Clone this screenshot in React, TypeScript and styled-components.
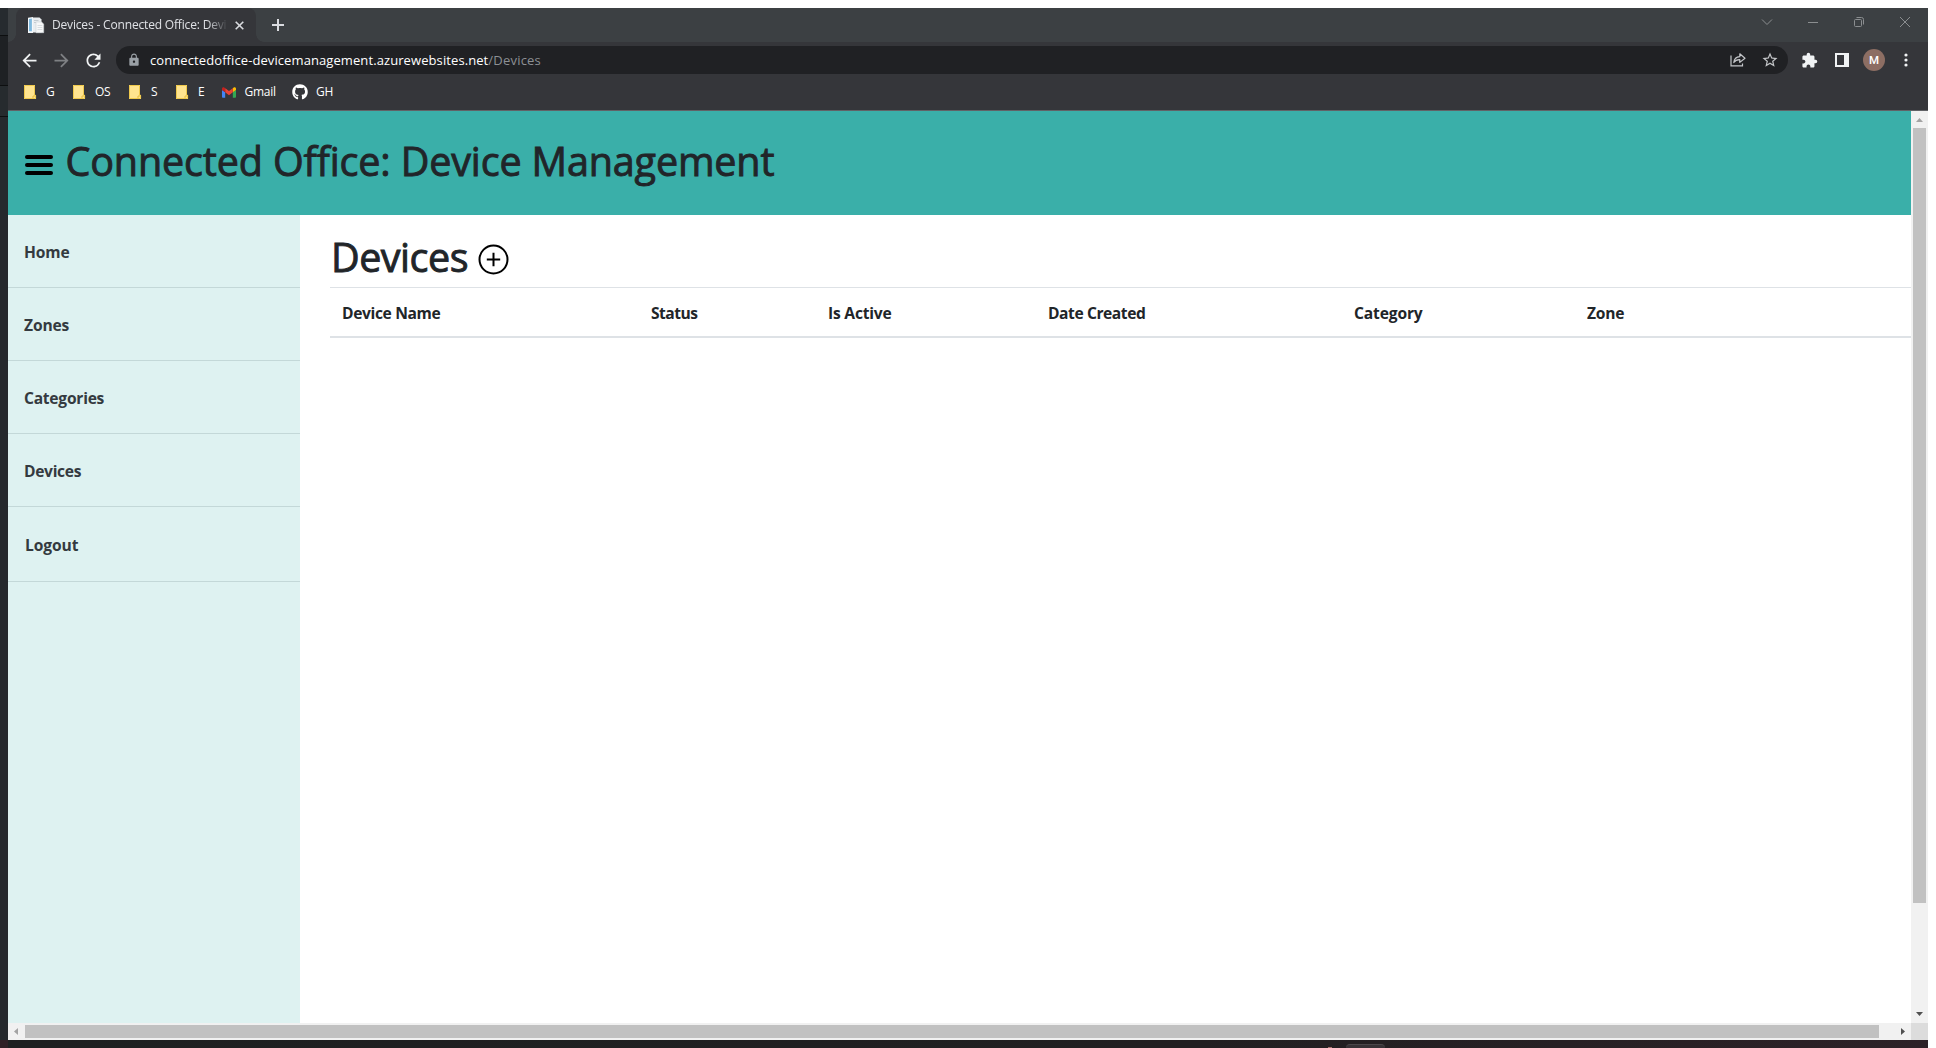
import React from 'react';
import styled, { createGlobalStyle } from 'styled-components';
import { MdArrowBack, MdArrowForward, MdRefresh, MdLock, MdStarBorder, MdExtension } from 'react-icons/md';
import { FaGithub } from 'react-icons/fa';

const GlobalStyle = createGlobalStyle`
  * { box-sizing: border-box; }
  body { margin: 0; background: #fff; overflow: hidden; font-family: "Open Sans", "Noto Sans", sans-serif; }
  svg { display: block; flex: none; }
`;

const Desktop = styled.div`
  display: grid;
  grid-template-columns: 8px 1920px;
  grid-template-rows: 1032px 8px;
  width: 1936px;
  height: 1048px;
  padding-top: 8px;
`;

const LeftEdge = styled.div`
  background: linear-gradient(#262b2f 0 27px, #0d0f10 27px 28px, #1e2124 28px 77px, #0d0f10 77px 78px, #262b2e 78px 108px, #0d0f10 108px 109px, #25292d 109px);
`;

const BottomEdge = styled.div`
  grid-column: 1 / 3;
  display: flex;
  align-items: flex-end;
  padding-left: 1328px;
  background: linear-gradient(90deg, #2f1f25 0 8px, #1e2021 8px, #211f21 1200px, #2d2127);
`;

const TrayDot = styled.span`
  width: 4px;
  height: 1px;
  margin-right: 14px;
  background: #a5736e;
`;

const TrayPill = styled.span`
  width: 39px;
  height: 4px;
  border-top: 1px solid #4b474a;
  border-radius: 4px 4px 0 0;
  background: #373236;
`;

const Browser = styled.div`
  display: flex;
  flex-direction: column;
  min-width: 0;
  background: #fff;
`;

const TabStrip = styled.div`
  display: flex;
  height: 34px;
  padding-left: 8px;
  background: #3c4043;
`;

const Tab = styled.div`
  position: relative;
  display: flex;
  align-items: center;
  width: 240px;
  padding: 0 12px 0 12px;
  border-radius: 8px 8px 0 0;
  background: #35363a;
  &::before, &::after {
    content: '';
    position: absolute;
    bottom: 0;
    width: 8px;
    height: 8px;
  }
  &::before { left: -8px; background: radial-gradient(circle at 0 0, transparent 7.5px, #35363a 8px); }
  &::after { right: -8px; background: radial-gradient(circle at 100% 0, transparent 7.5px, #35363a 8px); }
`;

const TabTitle = styled.span`
  width: 176px;
  margin: 0 8px 0 7px;
  overflow: hidden;
  white-space: nowrap;
  font-size: 12px;
  line-height: 16px;
  letter-spacing: -0.17px;
  color: #dfe1e5;
  mask-image: linear-gradient(90deg, #000 155px, transparent 176px);
`;

const NewTab = styled.div`
  display: flex;
  align-items: center;
  margin-left: 16px;
`;

const WindowControls = styled.div`
  display: flex;
  align-items: center;
  gap: 34px;
  height: 28px;
  margin-left: auto;
  padding-right: 17px;
`;

const Toolbar = styled.div`
  display: flex;
  align-items: center;
  height: 36px;
  background: #35363a;
`;

const NavButton = styled.span<{ $dim?: boolean }>`
  display: flex;
  justify-content: center;
  width: 32px;
  color: ${(p) => (p.$dim ? '#7f8184' : '#f1f3f4')};
`;

const NavGroup = styled.div`
  display: flex;
  width: 108px;
  padding-left: 5.5px;
`;

const Omnibox = styled.div`
  display: flex;
  align-items: center;
  width: 1672px;
  height: 28px;
  padding: 0 9px 0 11px;
  border-radius: 14px;
  background: #202124;
  color: #9aa0a6;
`;

const Url = styled.span`
  margin: 0 auto 0 9px;
  font-size: 13px;
  line-height: 20px;
  letter-spacing: 0.09px;
  color: #fff;
`;

const UrlPath = styled.span`
  letter-spacing: 0.2px;
  color: #8d9094;
`;

const OmniActions = styled.span`
  display: flex;
  align-items: center;
  gap: 15px;
  color: #c4c6c9;
`;

const Extensions = styled.div`
  display: flex;
  align-items: center;
  color: #f1f3f4;
  padding-left: 13px;
`;

const SidePanelIcon = styled.svg`
  margin-left: 17px;
`;

const Avatar = styled.span`
  width: 22px;
  height: 22px;
  margin: 0 19px 0 14px;
  border-radius: 50%;
  background: #8d6e63;
  color: #fff;
  font: 500 11.5px/22px Roboto, sans-serif;
  text-align: center;
`;

const Bookmarks = styled.div`
  display: flex;
  align-items: center;
  height: 33px;
  padding: 0 0 4px 16px;
  background: #35363a;
  border-bottom: 1px solid #616266;
`;

const Bookmark = styled.div<{ $width: number }>`
  display: flex;
  align-items: center;
  width: ${(p) => p.$width}px;
  font-size: 12px;
  line-height: 16px;
  letter-spacing: -0.25px;
  color: #fff;
`;

const BookmarkIcon = styled.span<{ $width: number }>`
  width: ${(p) => p.$width}px;
  flex: none;
`;

const Viewport = styled.div`
  display: grid;
  grid-template-columns: 1903px 17px;
  grid-template-rows: 912px 17px;
`;

const Page = styled.div`
  display: grid;
  grid-template-columns: 292px 1fr;
  grid-template-rows: 104px 808px;
  overflow: hidden;
  color: #212529;
`;

const Header = styled.header`
  grid-column: 1 / 3;
  display: flex;
  align-items: flex-start;
  padding: 26px 0 0 17px;
  background: #3aafa9;
`;

const Burger = styled.span`
  display: flex;
  flex-direction: column;
  gap: 4px;
  margin: 18px 12.5px 0 0;
`;

const BurgerBar = styled.i`
  width: 28px;
  height: 4px;
  border-radius: 2px;
  background: #000;
`;

const Title = styled.h1<{ $spacing: number }>`
  margin: 0;
  font-size: 39.5px;
  font-weight: 500;
  line-height: 48px;
  letter-spacing: ${(p) => p.$spacing}px;
  white-space: nowrap;
  -webkit-text-stroke: 0.9px #212529;
`;

const Sidebar = styled.nav`
  background: #def2f1;
`;

const SideLink = styled.div<{ $inset?: boolean; $spacing: number }>`
  height: ${(p) => (p.$inset ? 75 : 73)}px;
  padding: ${(p) => (p.$inset ? '26px 0 0 17px' : '25px 0 0 16px')};
  border-bottom: 1px solid #c3d8d8;
  font-size: 15.6px;
  font-weight: 700;
  line-height: 24px;
  letter-spacing: ${(p) => p.$spacing}px;
  color: #343a40;
`;

const Main = styled.main`
  min-width: 0;
  padding: 16px 0 0 30px;
`;

const Heading = styled.div`
  display: flex;
  align-items: flex-start;
  height: 56px;
  padding: 2px 0 0 1px;
`;

const AddIcon = styled.svg`
  margin: 10.500px 0 0 10px;
`;

const Table = styled.table`
  width: 1581px;
  table-layout: fixed;
  border-collapse: separate;
  border-spacing: 0;
`;

const Th = styled.th<{ $width?: number; $spacing: number }>`
  width: ${(p) => (p.$width ? `${p.$width}px` : 'auto')};
  height: 51px;
  padding: 13px 12px 11px 12px;
  border-top: 1px solid #dee2e6;
  border-bottom: 2px solid #dee2e6;
  font-size: 15.6px;
  font-weight: 700;
  line-height: 24px;
  letter-spacing: ${(p) => p.$spacing}px;
  text-align: left;
  white-space: nowrap;
`;

const VScroll = styled.div`
  display: flex;
  flex-direction: column;
  align-items: center;
  justify-content: space-between;
  padding: 7px 0;
  background: #f1f1f1;
`;

const VThumb = styled.div`
  width: 13px;
  height: 775px;
  margin: 6px 0 auto;
  background: #c1c1c1;
`;

const HScroll = styled.div`
  display: flex;
  align-items: center;
  padding: 0 6px;
  background: #f1f1f1;
`;

const HThumb = styled.div`
  width: 1854px;
  height: 13px;
  margin: 0 auto 0 7px;
  background: #c1c1c1;
`;

const Corner = styled.div`
  background: #dcdcdc;
`;

const FolderIcon = () => (
  <svg width="14" height="14" viewBox="0 0 14 14">
    <path d="M0 0H11V10H12V14H0Z" fill="#ffe48f" />
    <path d="M.5 .5H10.5V10.2H11.6V13.5H.5Z" fill="none" stroke="#efc94c" strokeWidth="1" />
    <path d="M9 13.5V11H11" fill="none" stroke="#e8bd3d" strokeWidth="1" />
  </svg>
);

const GmailIcon = () => (
  <svg width="14" height="11" viewBox="52 42 88 66">
    <path fill="#4285f4" d="M58 108h14V74L52 59v43c0 3.320 2.690 6 6 6" />
    <path fill="#34a853" d="M120 108h14c3.320 0 6-2.690 6-6V59l-20 15" />
    <path fill="#fbbc04" d="M120 48v26l20-15v-8c0-7.420-8.470-11.650-14.400-7.200" />
    <path fill="#ea4335" d="M72 74V48l24 18 24-18v26L96 92" />
    <path fill="#c5221f" d="M52 51v8l20 15V48l-5.600-4.200c-5.940-4.450-14.400-.22-14.400 7.200" />
  </svg>
);

const Favicon = () => (
  <svg width="17" height="17" viewBox="0 0 17 17">
    <path d="M0 .8L5 0V16H0Z" fill="#f5f8fa" />
    <path d="M1 2L3.900 1.500V14.200H1Z" fill="#7fb9de" />
    <path d="M5 .5H11.500L13.500 2.500V15.500H5Z" fill="#e9edf0" />
    <path d="M6 3.500H10.500M6 5.500H8" stroke="#c3cbd1" />
    <path d="M8 5H13.500L15.700 7V15.700H8Z" fill="#f7f8f8" stroke="#cfd4d8" strokeWidth=".6" />
    <path d="M9.500 8.500H14.300M9.500 10.500H14.300M9.500 12.500H14.300" stroke="#d8dee2" />
  </svg>
);

const ShareIcon = () => (
  <svg width="16" height="16" viewBox="0 0 16 16" fill="none" stroke="currentColor" strokeWidth="1.200">
    <path d="M1 3.500V13.900H12.500V11.500" />
    <path d="M3.800 10.500C4.200 6.800 6 4.900 9.800 4.700V1.800L15 6.200L9.800 10.400V7.600C7 7.500 5.200 8.400 3.800 10.500Z" strokeLinejoin="round" />
  </svg>
);

const BOOKMARKS = [
  { label: 'G', icon: <FolderIcon />, width: 49, text: 22 },
  { label: 'OS', icon: <FolderIcon />, width: 56, text: 22 },
  { label: 'S', icon: <FolderIcon />, width: 47, text: 22 },
  { label: 'E', icon: <FolderIcon />, width: 46, text: 22 },
  { label: 'Gmail', icon: <GmailIcon />, width: 70, text: 22.5 },
  { label: 'GH', icon: <FaGithub size={16} />, width: 60, text: 24 },
];

const LINKS = [
  { label: 'Home', spacing: -0.15 },
  { label: 'Zones', spacing: -0.15 },
  { label: 'Categories', spacing: -0.25 },
  { label: 'Devices', spacing: -0.32 },
  { label: 'Logout', spacing: -0.1, inset: true },
];

const COLUMNS = [
  { label: 'Device Name', width: 309, spacing: -0.36 },
  { label: 'Status', width: 177, spacing: -0.5 },
  { label: 'Is Active', width: 220, spacing: -0.2 },
  { label: 'Date Created', width: 306, spacing: -0.42 },
  { label: 'Category', width: 233, spacing: -0.15 },
  { label: 'Zone', spacing: -0.2 },
];

export default function App() {
  return (
    <>
      <GlobalStyle />
      <Desktop>
        <LeftEdge />
        <Browser>
          <TabStrip>
            <Tab>
              <Favicon />
              <TabTitle>Devices - Connected Office: Devic</TabTitle>
              <svg width="9" height="9" viewBox="0 0 9 9" stroke="#dadce0" strokeWidth="1.600"><path d="M.7 .7L8.300 8.300M8.300 .7L.7 8.300" /></svg>
            </Tab>
            <NewTab>
              <svg width="12" height="12" viewBox="0 0 12 12" stroke="#dadce0" strokeWidth="2"><path d="M6 0V12M0 6H12" /></svg>
            </NewTab>
            <WindowControls>
              <svg width="12" height="12" viewBox="0 0 12 12" fill="none" stroke="#8b8e90"><path d="M1 3.500L6 8.500L11 3.500" /></svg>
              <svg width="12" height="12" viewBox="0 0 12 12" fill="none" stroke="#8b8e90"><path d="M1 6.500H11" /></svg>
              <svg width="12" height="12" viewBox="0 0 12 12" fill="none" stroke="#8b8e90"><rect x="1.500" y="3.500" width="7" height="7" rx="1" /><path d="M3.500 1.500H8.500Q10.500 1.500 10.500 3.500V8.500" /></svg>
              <svg width="12" height="12" viewBox="0 0 12 12" fill="none" stroke="#8b8e90"><path d="M1 1L11 11M11 1L1 11" /></svg>
            </WindowControls>
          </TabStrip>
          <Toolbar>
            <NavGroup>
              <NavButton><MdArrowBack size={21} /></NavButton>
              <NavButton $dim><MdArrowForward size={21} /></NavButton>
              <NavButton><MdRefresh size={21} /></NavButton>
            </NavGroup>
            <Omnibox>
              <MdLock size={14} />
              <Url>connectedoffice-devicemanagement.azurewebsites.net<UrlPath>/Devices</UrlPath></Url>
              <OmniActions>
                <ShareIcon />
                <MdStarBorder size={18} />
              </OmniActions>
            </Omnibox>
            <Extensions>
              <MdExtension size={17} />
              <SidePanelIcon width="14" height="14" viewBox="0 0 14 14" fill="currentColor">
                <path fillRule="evenodd" d="M0 0H14V14H0ZM2 2V12H9V2Z" />
              </SidePanelIcon>
              <Avatar>M</Avatar>
              <svg width="4" height="14" viewBox="0 0 4 14" fill="currentColor"><circle cx="2" cy="2" r="1.600" /><circle cx="2" cy="7" r="1.600" /><circle cx="2" cy="12" r="1.600" /></svg>
            </Extensions>
          </Toolbar>
          <Bookmarks>
            {BOOKMARKS.map((b) => (
              <Bookmark key={b.label} $width={b.width}>
                <BookmarkIcon $width={b.text}>{b.icon}</BookmarkIcon>
                {b.label}
              </Bookmark>
            ))}
          </Bookmarks>
          <Viewport>
            <Page>
              <Header>
                <Burger><BurgerBar /><BurgerBar /><BurgerBar /></Burger>
                <Title $spacing={-0.15}>Connected Office: Device Management</Title>
              </Header>
              <Sidebar>
                {LINKS.map((l) => (
                  <SideLink key={l.label} $inset={l.inset} $spacing={l.spacing}>{l.label}</SideLink>
                ))}
              </Sidebar>
              <Main>
                <Heading>
                  <Title $spacing={-0.5}>Devices</Title>
                  <AddIcon width="31" height="31" viewBox="0 0 31 31" fill="none" stroke="#000" strokeWidth="2">
                    <circle cx="15.500" cy="15.500" r="14" />
                    <path d="M15.500 8.800V22.200M8.800 15.500H22.200" />
                  </AddIcon>
                </Heading>
                <Table>
                  <thead>
                    <tr>
                      {COLUMNS.map((c) => (
                        <Th key={c.label} $width={c.width} $spacing={c.spacing}>{c.label}</Th>
                      ))}
                    </tr>
                  </thead>
                </Table>
              </Main>
            </Page>
            <VScroll>
              <svg width="7" height="4" viewBox="0 0 7 4"><path d="M0 4L3.500 0L7 4Z" fill="#a3a3a3" /></svg>
              <VThumb />
              <svg width="7" height="4" viewBox="0 0 7 4"><path d="M0 0L3.500 4L7 0Z" fill="#505050" /></svg>
            </VScroll>
            <HScroll>
              <svg width="4" height="7" viewBox="0 0 4 7"><path d="M4 0L0 3.500L4 7Z" fill="#a3a3a3" /></svg>
              <HThumb />
              <svg width="4" height="7" viewBox="0 0 4 7"><path d="M0 0L4 3.500L0 7Z" fill="#505050" /></svg>
            </HScroll>
            <Corner />
          </Viewport>
        </Browser>
        <BottomEdge><TrayDot /><TrayPill /></BottomEdge>
      </Desktop>
    </>
  );
}
